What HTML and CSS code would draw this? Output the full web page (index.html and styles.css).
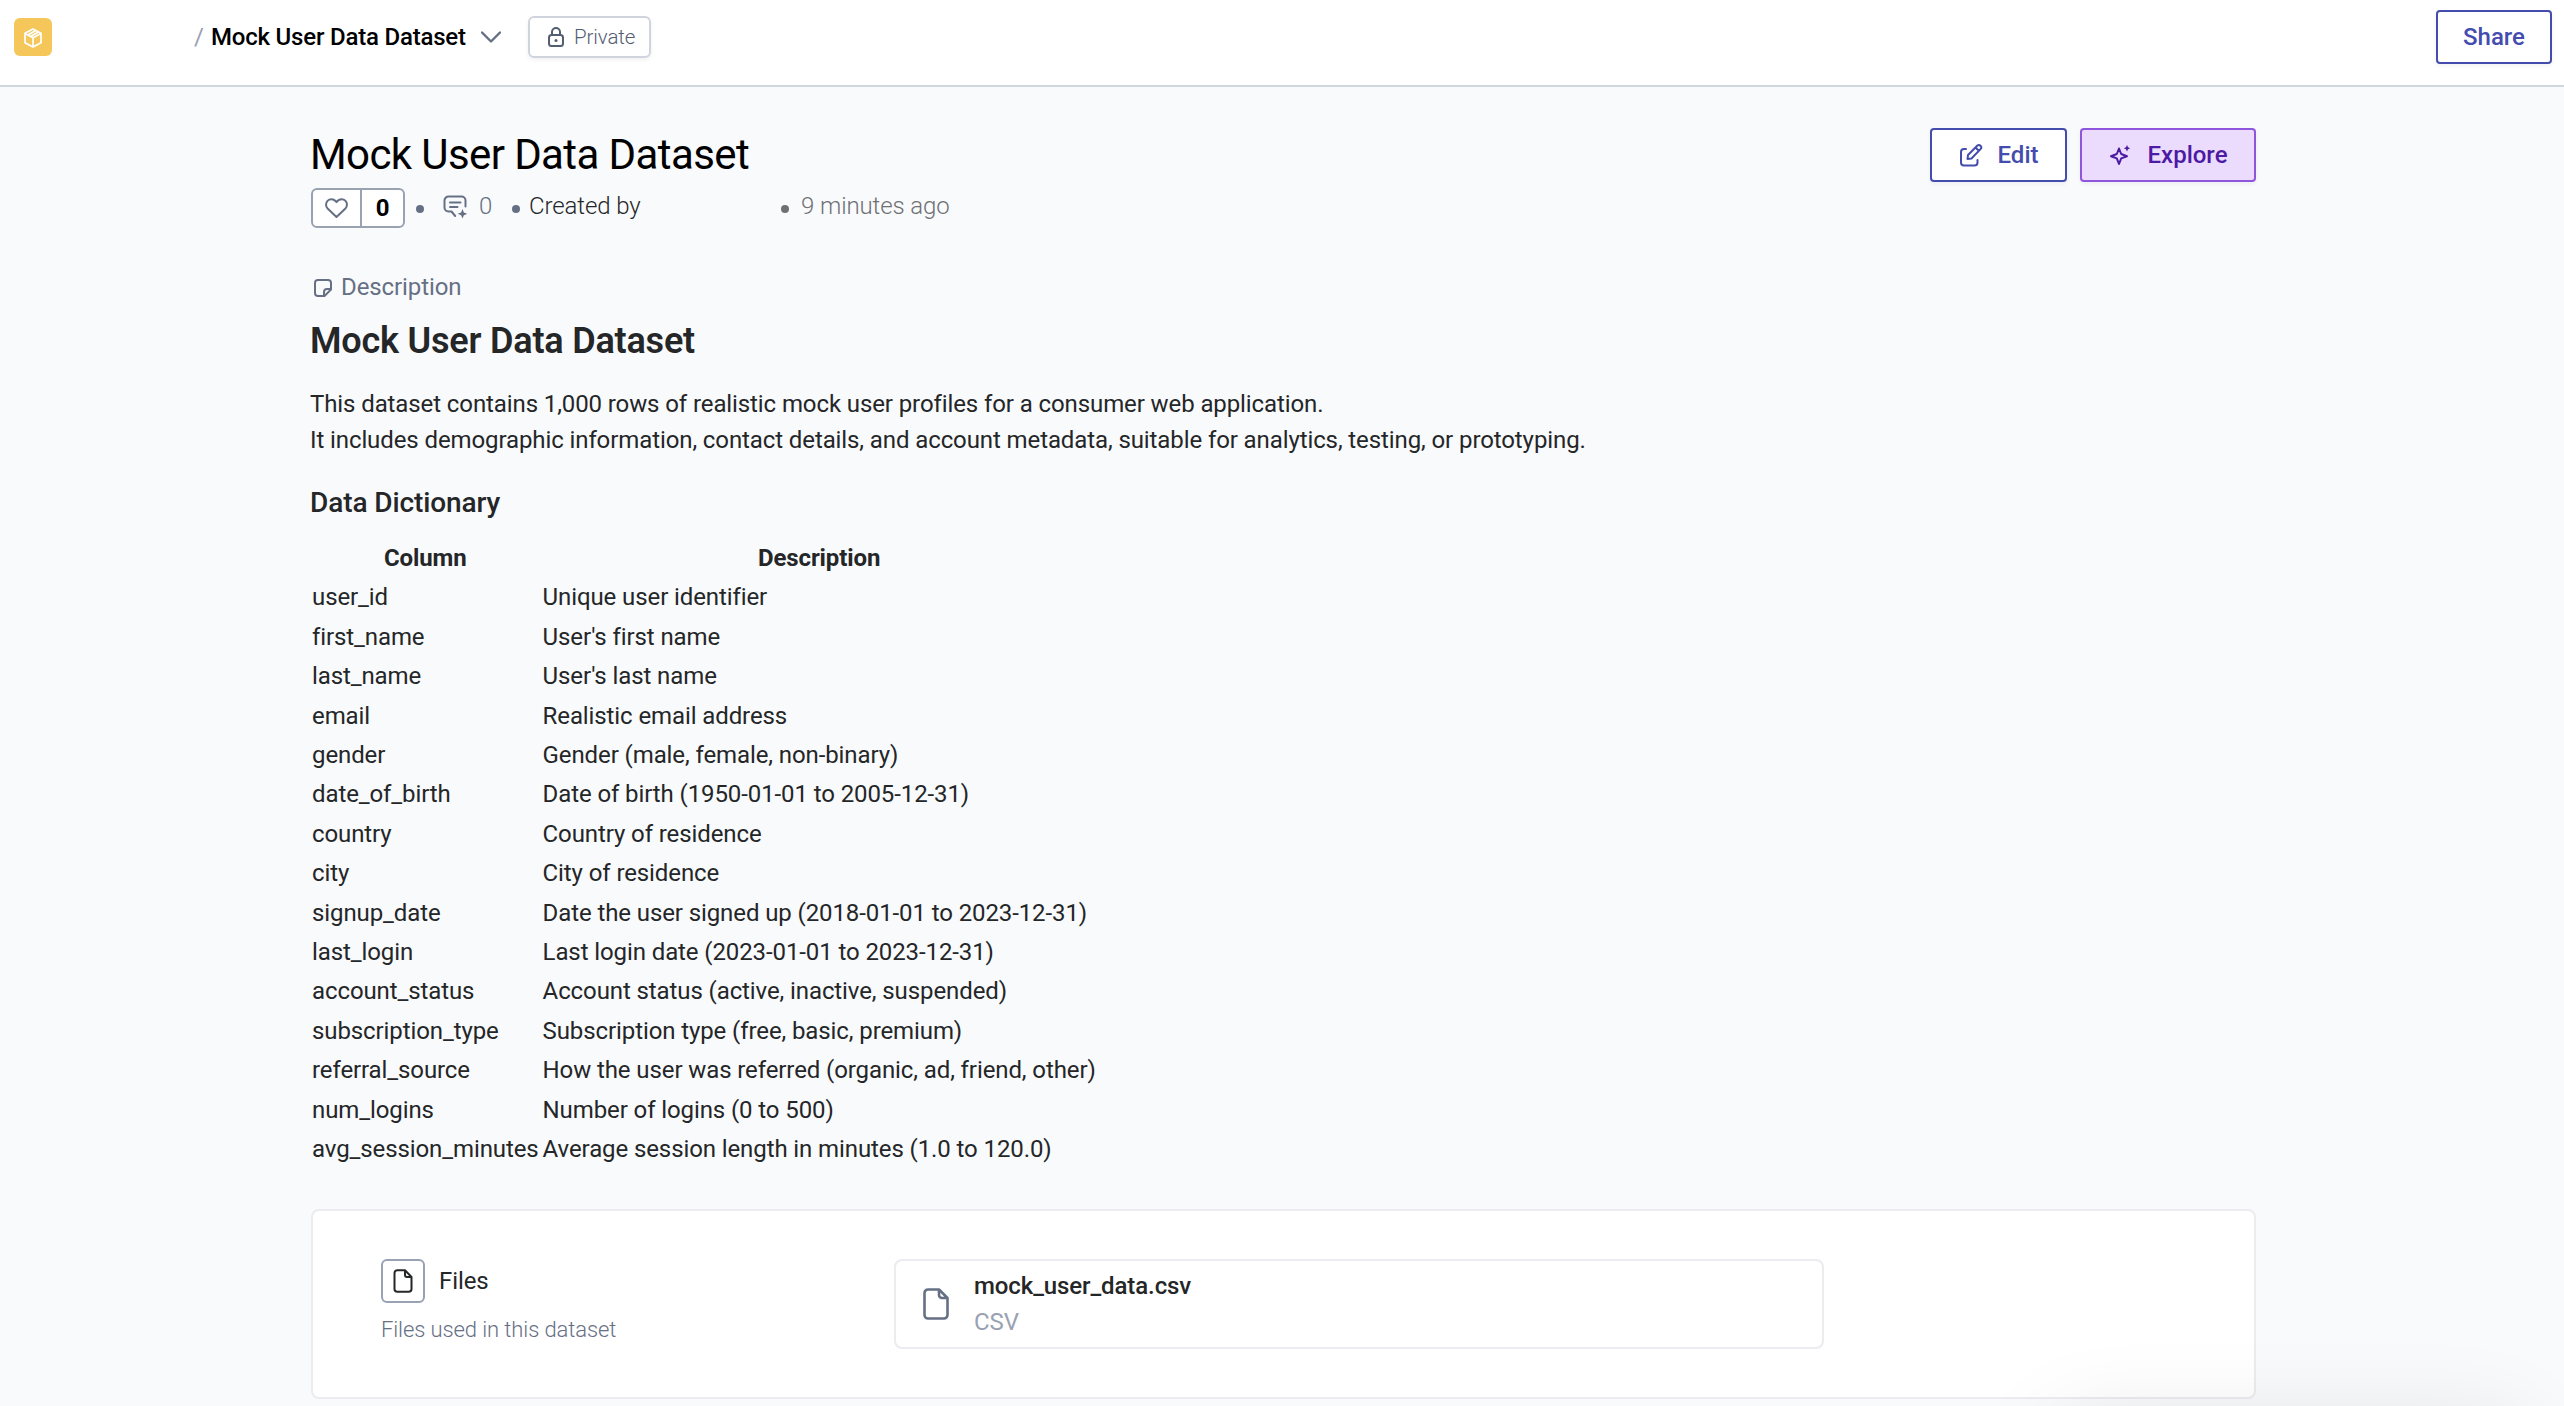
FILE: index.html
```html
<!DOCTYPE html>
<html lang="en">
<head>
<meta charset="utf-8">
<title>Mock User Data Dataset</title>
<link rel="stylesheet" href="styles.css">
</head>
<body>
<header class="topbar">
  <div class="logo">
    <svg viewBox="0 0 18 20" width="18" height="20"><path d="M9 1 17 5.300v9.400L9 19 1 14.700V5.300zM1 5.500 9 9.800l8-4.300M9 9.800V19M3.800 7 11.800 2.600M6.400 8.400 14.400 4"/></svg>
  </div>
  <span class="slash">/</span>
  <span class="crumb">Mock User Data Dataset</span>
  <svg class="chevron" viewBox="0 0 20 12" width="20" height="12"><path d="M1 1.500 10 10.500 19 1.500"/></svg>
  <span class="private"><svg viewBox="0 0 16 20" width="16" height="20"><rect x="1" y="8" width="14" height="11" rx="2.500"/><path d="M4 8V5a4 4 0 0 1 8 0v3"/><circle class="solid" cx="8" cy="13.500" r="1.500"/></svg>Private</span>
  <button class="btn share">Share</button>
</header>
<main class="page">
  <section class="head">
    <div>
      <h1>Mock User Data Dataset</h1>
      <div class="meta">
        <div class="likes">
          <span class="heart"><svg viewBox="0 0 23 20" width="23" height="20"><path d="M11.500 19 2.600 10.500C.6 8.500.5 5 2.500 2.900c2.100-2.300 6-2.200 8 .1l1 1.100 1-1.100c2-2.300 5.900-2.400 8-.1 2 2.100 1.900 5.600-.1 7.600z"/></svg></span>
          <span class="count">0</span>
        </div>
        <i class="dot d1"></i>
        <svg class="comment" viewBox="0 0 24 24" width="24" height="24"><path d="M22.500 11.500V5.500a4 4 0 0 0-4-4h-13a4 4 0 0 0-4 4v7a4 4 0 0 0 4 4h3l3.700 4.500M7 7.500h10.500M7 12h7.500"/><path class="solid" d="M19.500 14l1.400 3.400 3.400 1.400-3.400 1.400-1.400 3.400-1.400-3.400-3.400-1.400 3.400-1.400z"/></svg>
        <span class="comments">0</span>
        <i class="dot d2"></i>
        <span class="by">Created by</span>
        <i class="dot d3"></i>
        <span class="ago">9 minutes ago</span>
      </div>
    </div>
    <div class="actions">
      <button class="btn edit"><svg viewBox="0 0 24 24" width="24" height="24"><path d="M7 6H5a3 3 0 0 0-3 3v10.500a3 3 0 0 0 3 3h10.500a3 3 0 0 0 3-3v-2.500M9 12l9.200-9.200a2.300 2.300 0 0 1 3.300 3.300L12.500 15.500 8.500 16zM16.500 4.500l3.300 3.300"/></svg>Edit</button>
      <button class="btn explore"><svg viewBox="0 0 22 22" width="22" height="22"><path d="M10 4.500 12.200 10 18 12.200 12.200 14.400 10 20 7.800 14.400 2 12.200 7.800 10z"/><path class="solid" d="M18 1l1 2.200 2.200 1-2.200 1-1 2.200-1-2.200-2.200-1 2.200-1z"/></svg>Explore</button>
    </div>
  </section>
  <div class="label"><svg viewBox="0 0 18 18" width="18" height="18"><path d="M4 1h10a3 3 0 0 1 3 3v6.500L10.500 17H4a3 3 0 0 1-3-3V4a3 3 0 0 1 3-3zM17 10h-4a3 3 0 0 0-3 3v4"/></svg>Description</div>
  <article class="markdown">
    <h2>Mock User Data Dataset</h2>
    <p>This dataset contains 1,000 rows of realistic mock user profiles for a consumer web application.<br>It includes demographic information, contact details, and account metadata, suitable for analytics, testing, or prototyping.</p>
    <h3>Data Dictionary</h3>
    <table>
      <thead><tr><th>Column</th><th>Description</th></tr></thead>
      <tbody>
        <tr><td>user_id</td><td>Unique user identifier</td></tr>
        <tr><td>first_name</td><td>User's first name</td></tr>
        <tr><td>last_name</td><td>User's last name</td></tr>
        <tr><td>email</td><td>Realistic email address</td></tr>
        <tr><td>gender</td><td>Gender (male, female, non-binary)</td></tr>
        <tr><td>date_of_birth</td><td>Date of birth (1950-01-01 to 2005-12-31)</td></tr>
        <tr><td>country</td><td>Country of residence</td></tr>
        <tr><td>city</td><td>City of residence</td></tr>
        <tr><td>signup_date</td><td>Date the user signed up (2018-01-01 to 2023-12-31)</td></tr>
        <tr><td>last_login</td><td>Last login date (2023-01-01 to 2023-12-31)</td></tr>
        <tr><td>account_status</td><td>Account status (active, inactive, suspended)</td></tr>
        <tr><td>subscription_type</td><td>Subscription type (free, basic, premium)</td></tr>
        <tr><td>referral_source</td><td>How the user was referred (organic, ad, friend, other)</td></tr>
        <tr><td>num_logins</td><td>Number of logins (0 to 500)</td></tr>
        <tr><td>avg_session_minutes</td><td>Average session length in minutes (1.0 to 120.0)</td></tr>
      </tbody>
    </table>
  </article>
  <section class="card">
    <div class="about">
      <div class="files"><span class="iconbox"><svg viewBox="0 0 20 24" width="20" height="24"><path d="M4 1.200h8L18.500 8v12a2.800 2.800 0 0 1-2.800 2.800H4.300A2.800 2.800 0 0 1 1.500 20V4A2.800 2.800 0 0 1 4.300 1.200zM12 1.200V6a2 2 0 0 0 2 2h4.500"/></svg></span>Files</div>
      <div class="hint">Files used in this dataset</div>
    </div>
    <div class="file">
      <svg viewBox="0 0 26 32" width="26" height="32"><path d="M5 1.500h11L24.500 10v17a3.500 3.500 0 0 1-3.500 3.500H5A3.500 3.500 0 0 1 1.500 27V5A3.500 3.500 0 0 1 5 1.500zM16 1.500V7a3 3 0 0 0 3 3h5.500"/></svg>
      <div><div class="name">mock_user_data.csv</div><div class="type">CSV</div></div>
    </div>
  </section>
</main>
<div class="glow"><div class="floating"></div></div>
</body>
</html>
```
FILE: styles.css
```css
* { box-sizing: border-box; }
body { margin: 0; height: 1406px; overflow: hidden; background: #f9fafc; color: #242628; font: 400 24px/36px Roboto, sans-serif; letter-spacing: -0.1px; position: relative; }
svg { fill: none; stroke: currentColor; stroke-width: 2; stroke-linejoin: round; stroke-linecap: round; flex: none; display: block; }
.solid { fill: currentColor; stroke: none; }
h1, h2, h3, p { margin: 0; }
.topbar { height: 87px; background: #fff; border-bottom: 2px solid #d0d7de; display: flex; align-items: flex-start; padding: 10px 12px 0 14px; color: #000; }
.logo { width: 38px; height: 38px; margin-top: 8px; padding-top: 1px; border-radius: 6px; background: #f5c75b; color: #fff; display: flex; align-items: center; justify-content: center; }
.logo svg { stroke-width: 1.700; }
.slash { margin: 9px 0 0 142px; width: 17px; color: #98a1b3; }
.crumb { margin-top: 9px; width: 270px; font-weight: 500; white-space: nowrap; letter-spacing: -0.200px; }
.chevron { margin-top: 21px; color: #667085; stroke-width: 2.400; }
.private { margin: 6px 0 0 27px; width: 123px; height: 42px; border: 2px solid #d0d5dd; border-radius: 6px; padding-left: 18px; display: flex; align-items: center; gap: 10px; font-size: 20.500px; font-weight: 300; color: #535d74; box-shadow: 0 2px 4px rgba(16,24,40,.06); }
.btn { height: 54px; border: 2px solid #444cae; border-radius: 4px; background: #fff; color: #444cae; font: 500 24px/36px Roboto, sans-serif; letter-spacing: 0; display: flex; align-items: center; justify-content: center; padding: 0; box-shadow: 0 2px 4px rgba(16,24,40,.05); }
.share { width: 116px; margin-left: auto; }
.page { width: 1945px; margin-left: 311px; padding-top: 41px; }
.head { display: flex; justify-content: space-between; height: 131px; }
h1 { margin: 1px 0 0 -1px; font-weight: 400; font-size: 42px; line-height: 52px; letter-spacing: -0.600px; color: #000; }
.meta { margin-top: 7px; height: 40px; display: flex; align-items: center; color: #667085; white-space: nowrap; font-weight: 300; }
.likes { width: 94px; height: 40px; border: 2px solid #98a2b3; border-radius: 6px; background: #fff; display: flex; }
.heart { width: 49px; border-right: 2px solid #98a2b3; display: flex; align-items: center; justify-content: center; }
.count { flex: 1; color: #000; font-weight: 700; text-align: center; }
.dot { width: 8px; height: 8px; border-radius: 50%; background: currentColor; margin-top: 2px; }
.d1 { margin-left: 11px; }
.comment { margin: -3px 0 0 19px; }
.comments { margin-left: 12px; width: 33px; margin-top: -4px; }
.by { margin: -4px 0 0 9px; width: 252px; color: #242628; }
.d3, .ago { color: #6e7074; }
.ago { margin: -4px 0 0 12px; }
.actions { display: flex; gap: 13px; }
.edit { width: 137px; gap: 15px; }
.explore { width: 176px; gap: 17px; background: #ebdbfd; border-color: #8f55dc; color: #4c1aa3; }
.label { height: 36px; margin-top: 10px; padding-left: 3px; display: flex; align-items: center; gap: 9px; color: #667085; }
.label svg { margin-top: 2px; }
.markdown { margin-left: -1px; }
h2 { margin-top: 9px; font-weight: 600; font-size: 36px; line-height: 54px; letter-spacing: -0.200px; }
p { margin-top: 18px; }
h3 { margin-top: 24px; font-weight: 500; font-size: 28px; line-height: 42px; }
table { margin-top: 15px; border-collapse: collapse; }
td, th { padding: 2px; line-height: 35.400px; white-space: nowrap; }
th { font-weight: 700; }
.card { margin-top: 39px; height: 190px; border: 2px solid #ebebf0; border-radius: 8px; background: #fff; padding: 48px 68px; display: flex; }
.about { width: 513px; }
.files { display: flex; align-items: center; gap: 14px; color: #242628; }
.iconbox { width: 44px; height: 44px; border: 2px solid #98a2b3; border-radius: 6px; display: flex; align-items: center; justify-content: center; }
.hint { margin-top: 9px; font-size: 22px; font-weight: 300; color: #667085; }
.file { width: 930px; height: 90px; border: 2px solid #ebebf0; border-radius: 8px; display: flex; align-items: center; padding-left: 27px; gap: 25px; color: #667085; }
.file svg { stroke-width: 2.600; }
.name { font-weight: 500; color: #242628; }
.type { color: #98a2b3; }
.glow { position: absolute; inset: 0; overflow: hidden; pointer-events: none; }
.floating { position: absolute; left: 2060px; top: 1430px; width: 460px; height: 300px; box-shadow: 0 0 90px rgba(0,0,0,.12); }
```
